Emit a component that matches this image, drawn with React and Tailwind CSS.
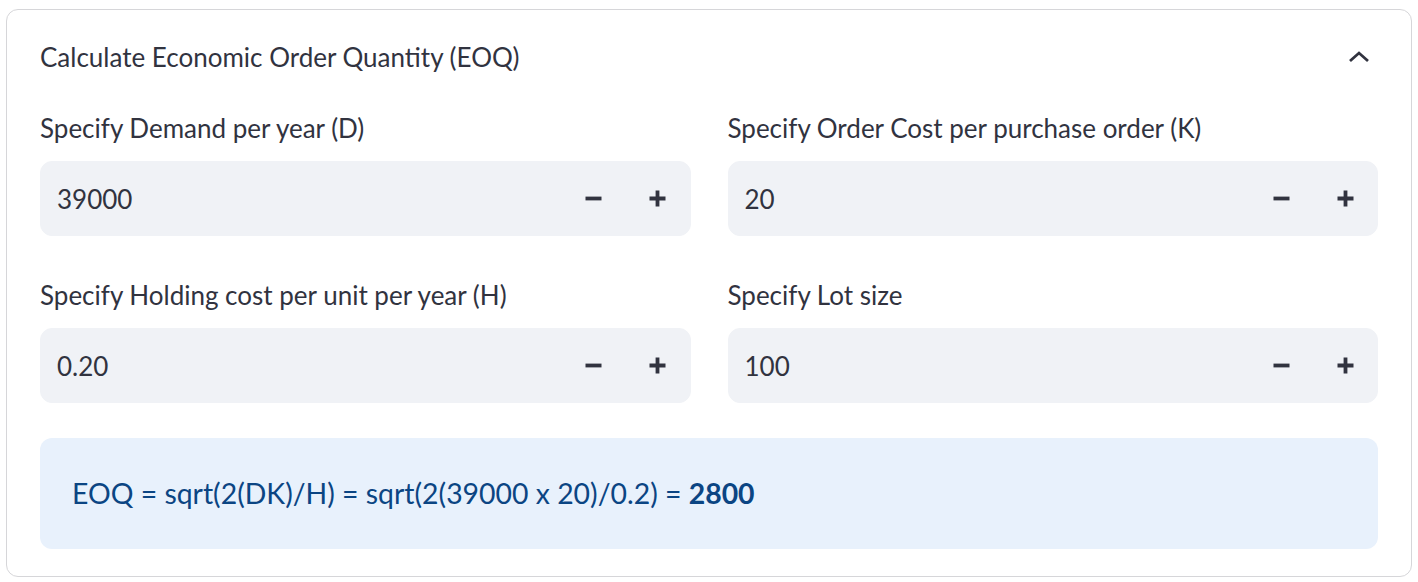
import React, { useState } from 'react';

const font = { fontFamily: 'Lato, "Noto Sans", sans-serif' };

function Stepper({ label, value }) {
  return (
    <div className="flex flex-col">
      <label className="h-[30px] leading-[30px] text-[26px] text-[#31333f]">{label}</label>
      <div className="mt-[18px] flex h-[75px] items-center rounded-xl border border-[#f0f2f6] bg-[#f0f2f6]">
        <input
          className="h-full min-w-0 flex-1 bg-transparent pl-[16px] text-[26px] text-[#31333f] outline-none"
          style={font}
          defaultValue={value}
        />
        <button className="flex h-full w-[64px] items-center justify-center text-[#31333f]">
          <svg width="17" height="17" viewBox="0 0 17 17">
            <path d="M0.5 8.5h16" stroke="currentColor" strokeWidth="3.8" />
          </svg>
        </button>
        <button className="flex h-full w-[64px] items-center justify-center text-[#31333f]">
          <svg width="17" height="17" viewBox="0 0 17 17">
            <path d="M0.5 8.5h16M8.5 0.5v16" stroke="currentColor" strokeWidth="3.8" />
          </svg>
        </button>
      </div>
    </div>
  );
}

export default function App() {
  const [open, setOpen] = useState(true);

  return (
    <div className="min-h-[582px] bg-white px-[6px] pt-[9px]" style={font}>
      <div className="rounded-xl border border-[#d6d6d9]">
        <button
          onClick={() => setOpen(!open)}
          className="flex h-[94px] w-full items-center justify-between px-[33px] text-left"
        >
          <span className="text-[26px] text-[#31333f]">Calculate Economic Order Quantity (EOQ)</span>
          <svg width="22" height="12" viewBox="0 0 22 12" className="mr-[8px] text-[#31333f]">
            <path d="M2 10l9-8 9 8" fill="none" stroke="currentColor" strokeWidth="2.8" />
          </svg>
        </button>
        {open && (
          <div className="px-[33px] pb-[27px] pt-[9px]">
            <div className="grid grid-cols-2 gap-x-[37px] gap-y-[44px]">
              <Stepper label="Specify Demand per year (D)" value="39000" />
              <Stepper label="Specify Order Cost per purchase order (K)" value="20" />
              <Stepper label="Specify Holding cost per unit per year (H)" value="0.20" />
              <Stepper label="Specify Lot size" value="100" />
            </div>
            <div className="mt-[35px] flex h-[111px] items-center rounded-xl bg-[#e8f1fc] px-[32px] text-[28.4px] text-[#0b4583]">
              <p>
                EOQ = sqrt(2(DK)/H) = sqrt(2(39000 x 20)/0.2) = <b>2800</b>
              </p>
            </div>
          </div>
        )}
      </div>
    </div>
  );
}
